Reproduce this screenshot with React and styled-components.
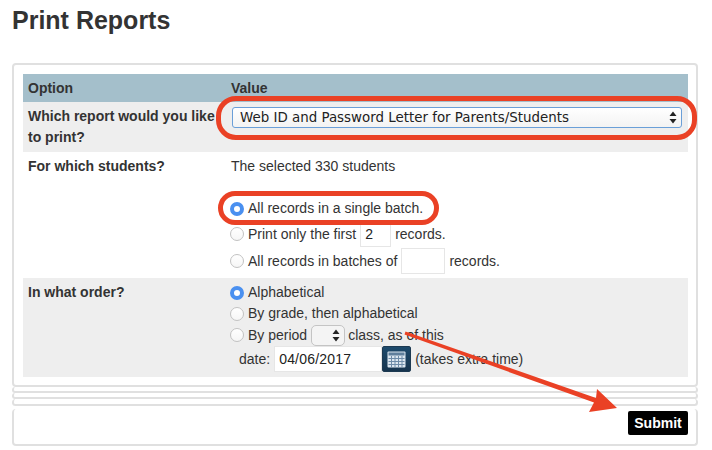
import React from 'react';
import styled, { createGlobalStyle } from 'styled-components';

const GlobalStyle = createGlobalStyle`
  html, body {
    margin: 0;
    padding: 0;
    background: #fff;
  }
  body {
    font-family: "Liberation Sans", Arial, sans-serif;
    font-size: 14px;
    color: #333;
  }
`;

const Page = styled.div`
  position: relative;
  width: 712px;
  height: 450px;
  overflow: hidden;
  padding: 0 14px 0 12px;
  box-sizing: border-box;
`;

const Title = styled.h1`
  margin: 0;
  padding-top: 6px;
  height: 63px;
  box-sizing: border-box;
  font-size: 25px;
  line-height: 28px;
  font-weight: 700;
  color: #333;
`;

const Panel = styled.section`
  box-sizing: border-box;
  border: 2px solid #e0e0e0;
  border-top-width: ${p => (p.$open ? 0 : 2)}px;
  border-radius: 4px;
  height: ${p => p.$height}px;
  margin-bottom: ${p => p.$gap || 0}px;
  padding: ${p => (p.$pad ? '9px 8px 0 9px' : '0')};
`;

const FootPanel = styled(Panel)`
  display: flex;
  justify-content: flex-end;
  padding: 2px 8px 0 0;
`;

const Row = styled.div`
  display: grid;
  grid-template-columns: 203px 1fr;
  height: ${p => p.$height}px;
  background: ${p => p.$bg || 'transparent'};
  padding-left: 5px;
`;

const HeadCell = styled.div`
  font-weight: 700;
  line-height: 28px;
`;

const Label = styled.div`
  font-weight: 700;
  line-height: 21px;
  padding-top: ${p => p.$top}px;
`;

const Value = styled.div`
  padding-top: ${p => p.$top || 0}px;
  line-height: 21px;
`;

const SelectedNote = styled.div`
  height: 42px;
`;

const Line = styled.label`
  display: flex;
  align-items: center;
  height: ${p => p.$height || 21}px;
  margin-left: -1px;
`;

const Radio = styled.span`
  box-sizing: border-box;
  flex: none;
  width: 14px;
  height: 14px;
  border-radius: 50%;
  margin-right: 4px;
  background: ${p => (p.$on ? '#fff' : 'linear-gradient(#fff, #f6f6f6)')};
  border: ${p => (p.$on ? '4.5px solid #4a90f0' : '1px solid #c2c2c2')};
`;

const SelectBox = styled.div`
  box-sizing: border-box;
  display: flex;
  align-items: center;
  justify-content: space-between;
  width: 450px;
  height: 21px;
  margin: 5px 0 0 1px;
  padding: 0 4px 0 7px;
  border: 1px solid #6a9fd8;
  border-radius: 3px;
  background: linear-gradient(#fff, #f3f3f3);
  font-family: "DejaVu Sans", sans-serif;
  font-size: 13.4px;
  color: #222;
  white-space: nowrap;
`;

const MiniSelect = styled.div`
  box-sizing: border-box;
  display: flex;
  align-items: center;
  justify-content: flex-end;
  width: 34px;
  height: 21px;
  margin: 0 3px 0 4px;
  padding-right: 4px;
  border: 1px solid #c4c4c4;
  border-radius: 5px;
  background: #f4f4f4;
`;

const NumberBox = styled.span`
  box-sizing: border-box;
  display: inline-block;
  width: ${p => p.$width}px;
  height: 26px;
  margin: ${p => p.$margin || '0 4px'};
  padding-left: 4px;
  border: 1px solid #e6e6e6;
  background: #fff;
  font-size: 14px;
  letter-spacing: 0.2px;
  line-height: 24px;
  color: #222;
`;

const DateLine = styled.div`
  display: flex;
  align-items: center;
  height: 26px;
  padding-left: 8px;
`;

const CalendarButton = styled.button`
  box-sizing: border-box;
  display: flex;
  align-items: center;
  justify-content: center;
  width: 29px;
  height: 26px;
  padding: 0;
  margin: 0 4px 0 0;
  border: 1px solid #1d3a52;
  border-radius: 2px;
  background: linear-gradient(#1d4a6c, #16344e);
`;

const SubmitButton = styled.button`
  box-sizing: border-box;
  width: 60px;
  height: 24px;
  padding: 0;
  border: 0;
  border-radius: 2px;
  background: #000;
  color: #fff;
  font-family: "Liberation Sans", Arial, sans-serif;
  font-size: 14px;
  font-weight: 700;
`;

const Ring = styled.div`
  position: absolute;
  box-sizing: border-box;
  left: ${p => p.$x}px;
  top: ${p => p.$y}px;
  width: ${p => p.$w}px;
  height: ${p => p.$h}px;
  border: 5px solid #ea4125;
  border-radius: 20px;
`;

const ArrowLayer = styled.svg`
  position: absolute;
  left: 0;
  top: 0;
  pointer-events: none;
`;

const Updown = () => (
  <svg width="8" height="13" viewBox="0 0 8 13">
    <path d="M4 0.5 L7.5 5 L0.5 5 Z M4 12.5 L7.5 8 L0.5 8 Z" fill="#222" />
  </svg>
);

const CalendarIcon = () => (
  <svg width="19" height="17" viewBox="0 0 19 17">
    <rect x="0.5" y="0.5" width="18" height="16" fill="#dbe6ef" rx="1" />
    <rect x="1.5" y="1.5" width="16" height="3" fill="#5f7f9c" />
    <path d="M1.5 7.5H17.5M1.5 10.5H17.5M1.5 13.5H17.5M4.5 5V16M8 5V16M11.5 5V16M15 5V16" stroke="#6d8ba8" strokeWidth="1" />
  </svg>
);

export default function App() {
  return (
    <Page>
      <GlobalStyle />
      <Title>Print Reports</Title>

      <Panel $height={324} $pad>
        <Row $height={28} $bg="#a4bfcb">
          <HeadCell>Option</HeadCell>
          <HeadCell>Value</HeadCell>
        </Row>
        <Row $height={50} $bg="#eeeeee">
          <Label $top={4}>Which report would you like to print?</Label>
          <Value>
            <SelectBox>
              Web ID and Password Letter for Parents/Students
              <Updown />
            </SelectBox>
          </Value>
        </Row>
        <Row $height={126}>
          <Label $top={4}>For which students?</Label>
          <Value $top={4}>
            <SelectedNote>The selected 330 students</SelectedNote>
            <Line><Radio $on />All records in a single batch.</Line>
            <Line $height={30}><Radio />Print only the first<NumberBox $width={31}>2</NumberBox>records.</Line>
            <Line $height={24}><Radio />All records in batches of<NumberBox $width={44} />records.</Line>
          </Value>
        </Row>
        <Row $height={99} $bg="#eeeeee">
          <Label $top={4}>In what order?</Label>
          <Value $top={4}>
            <Line><Radio $on />Alphabetical</Line>
            <Line><Radio />By grade, then alphabetical</Line>
            <Line $height={22}><Radio />By period<MiniSelect><Updown /></MiniSelect>class, as of this</Line>
            <DateLine>
              date:
              <NumberBox $width={108} $margin="0 0 0 4px">04/06/2017</NumberBox>
              <CalendarButton type="button" aria-label="Pick a date"><CalendarIcon /></CalendarButton>
              (takes extra time)
            </DateLine>
          </Value>
        </Row>
      </Panel>
      <Panel $height={6} $open />
      <Panel $height={6} $open />
      <Panel $height={7} $open $gap={3} />
      <FootPanel $height={37} $open>
        <SubmitButton type="button">Submit</SubmitButton>
      </FootPanel>

      <Ring $x={216} $y={96} $w={481} $h={44} />
      <Ring $x={218} $y={191} $w={221} $h={34} />
      <ArrowLayer width="712" height="450" viewBox="0 0 712 450">
        <path d="M405.5 331.5 L596 398 L597 389 L617 408 L589 412 L594 402.5 L404.5 334.5 Z" fill="#ea4125" />
      </ArrowLayer>
    </Page>
  );
}
